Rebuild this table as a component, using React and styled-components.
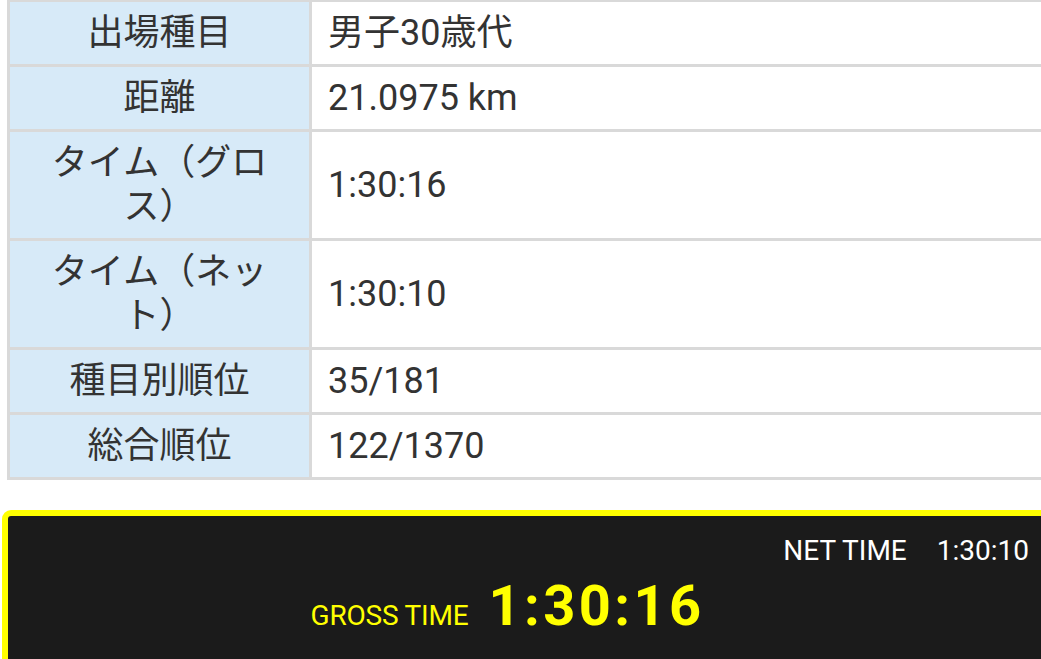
import React from 'react'
import styled, { createGlobalStyle } from 'styled-components'

const GlobalStyle = createGlobalStyle`
  html, body {
    margin: 0;
    padding: 0;
    background: #fff;
    overflow: hidden;
    width: 1041px;
    height: 659px;
  }
  body {
    font-family: Roboto, "Noto Sans CJK JP", sans-serif;
  }
`

const Page = styled.div`
  display: flex;
  flex-direction: column;
  width: 1041px;
  height: 659px;
  overflow: hidden;
`

const Table = styled.div`
  display: grid;
  grid-template-columns: 299px 1fr;
  gap: 3px;
  padding: 3px;
  margin: -1px 0 0 7px;
  width: 1060px;
  background: #d9d9d9;
  color: #333;
  font-size: 36px;
  line-height: 44px;
`

const Label = styled.div`
  background: #d7eaf8;
  padding: 9px 22px;
  text-align: center;
  display: flex;
  align-items: center;
  justify-content: center;
`

const Value = styled.div`
  background: #fff;
  padding: 9px 16px;
  display: flex;
  align-items: center;
`

const Board = styled.div`
  margin: 30px 0 0 2px;
  width: 1052px;
  flex: 1;
  box-sizing: border-box;
  border: 6px solid #ffff00;
  border-bottom: 0;
  border-radius: 9px 9px 0 0;
  background: #1b1b1b;
  padding: 18px 19px 0 0;
  display: flex;
  flex-direction: column;
`

const NetRow = styled.div`
  display: flex;
  justify-content: flex-end;
  gap: 30px;
  color: #fff;
  font-size: 28px;
  line-height: 33px;
`

const GrossRow = styled.div`
  display: flex;
  justify-content: center;
  align-items: baseline;
  gap: 20px;
  margin-top: 6px;
  padding-right: 22px;
  color: #ffff00;
`

const GrossLabel = styled.span`
  font-size: 28px;
  letter-spacing: -0.2px;
`

const GrossTime = styled.span`
  font-size: 56px;
  font-weight: 700;
  letter-spacing: 3.4px;
`

const rows = [
  ['出場種目', '男子30歳代'],
  ['距離', '21.0975 km'],
  ['タイム（グロス）', '1:30:16'],
  ['タイム（ネット）', '1:30:10'],
  ['種目別順位', '35/181'],
  ['総合順位', '122/1370'],
]

const App = () => {
  return (
    <Page>
      <GlobalStyle />
      <Table>
        {rows.map(([label, value]) => (
          <React.Fragment key={label}>
            <Label>{label}</Label>
            <Value>{value}</Value>
          </React.Fragment>
        ))}
      </Table>
      <Board>
        <NetRow>
          <span>NET TIME</span>
          <span>1:30:10</span>
        </NetRow>
        <GrossRow>
          <GrossLabel>GROSS TIME</GrossLabel>
          <GrossTime>1:30:16</GrossTime>
        </GrossRow>
      </Board>
    </Page>
  )
}

export default App
